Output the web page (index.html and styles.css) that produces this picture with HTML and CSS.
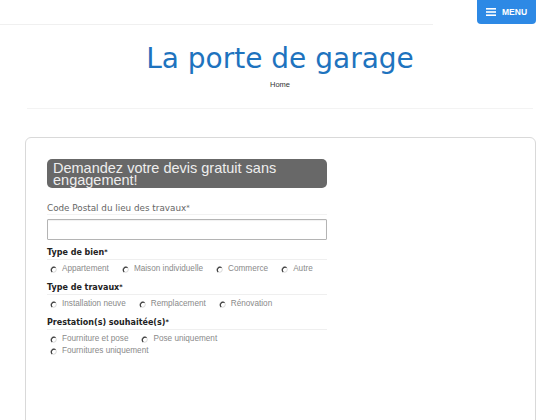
FILE: index.html
```html
<!DOCTYPE html>
<html lang="fr">
<head>
<meta charset="utf-8">
<title>La porte de garage</title>
<link rel="stylesheet" href="styles.css">
</head>
<body>
<header class="topbar">
  <div class="topbar-line"></div>
  <button class="menu-btn" type="button">
    <svg class="menu-icon" width="10" height="8" viewBox="0 0 10 8"><rect x="0" y="0" width="10" height="1.6" fill="#fff"/><rect x="0" y="3.2" width="10" height="1.6" fill="#fff"/><rect x="0" y="6.4" width="10" height="1.6" fill="#fff"/></svg>
    <span>MENU</span>
  </button>
</header>

<div class="branding">
  <h1 class="site-title">La porte de garage</h1>
  <div class="breadcrumb">Home</div>
</div>
<div class="divider"></div>

<main class="card">
  <form class="devis">
    <h2 class="devis-title">Demandez votre devis gratuit sans engagement!</h2>

    <label class="field-label" for="cp">Code Postal du lieu des travaux<span class="req">*</span></label>
    <input class="text-input" id="cp" type="text">

    <div class="section">
      <div class="section-label">Type de bien<span class="req">*</span></div>
      <div class="options">
        <span class="opt"><svg class="radio" width="7" height="7" viewBox="0 0 7 7"><circle cx="3.5" cy="3.5" r="2.8" fill="#fff" stroke="#d4d4d4" stroke-width="0.9"/><path d="M5.6 1.6 A2.8 2.8 0 0 0 2.2 6" fill="none" stroke="#3a3a3a" stroke-width="1.1"/></svg>Appartement</span>
        <span class="opt"><svg class="radio" width="7" height="7" viewBox="0 0 7 7"><circle cx="3.5" cy="3.5" r="2.8" fill="#fff" stroke="#d4d4d4" stroke-width="0.9"/><path d="M5.6 1.6 A2.8 2.8 0 0 0 2.2 6" fill="none" stroke="#3a3a3a" stroke-width="1.1"/></svg>Maison individuelle</span>
        <span class="opt"><svg class="radio" width="7" height="7" viewBox="0 0 7 7"><circle cx="3.5" cy="3.5" r="2.8" fill="#fff" stroke="#d4d4d4" stroke-width="0.9"/><path d="M5.6 1.6 A2.8 2.8 0 0 0 2.2 6" fill="none" stroke="#3a3a3a" stroke-width="1.1"/></svg>Commerce</span>
        <span class="opt"><svg class="radio" width="7" height="7" viewBox="0 0 7 7"><circle cx="3.5" cy="3.5" r="2.8" fill="#fff" stroke="#d4d4d4" stroke-width="0.9"/><path d="M5.6 1.6 A2.8 2.8 0 0 0 2.2 6" fill="none" stroke="#3a3a3a" stroke-width="1.1"/></svg>Autre</span>
      </div>
    </div>

    <div class="section">
      <div class="section-label">Type de travaux<span class="req">*</span></div>
      <div class="options">
        <span class="opt"><svg class="radio" width="7" height="7" viewBox="0 0 7 7"><circle cx="3.5" cy="3.5" r="2.8" fill="#fff" stroke="#d4d4d4" stroke-width="0.9"/><path d="M5.6 1.6 A2.8 2.8 0 0 0 2.2 6" fill="none" stroke="#3a3a3a" stroke-width="1.1"/></svg>Installation neuve</span>
        <span class="opt"><svg class="radio" width="7" height="7" viewBox="0 0 7 7"><circle cx="3.5" cy="3.5" r="2.8" fill="#fff" stroke="#d4d4d4" stroke-width="0.9"/><path d="M5.6 1.6 A2.8 2.8 0 0 0 2.2 6" fill="none" stroke="#3a3a3a" stroke-width="1.1"/></svg>Remplacement</span>
        <span class="opt"><svg class="radio" width="7" height="7" viewBox="0 0 7 7"><circle cx="3.5" cy="3.5" r="2.8" fill="#fff" stroke="#d4d4d4" stroke-width="0.9"/><path d="M5.6 1.6 A2.8 2.8 0 0 0 2.2 6" fill="none" stroke="#3a3a3a" stroke-width="1.1"/></svg>Rénovation</span>
      </div>
    </div>

    <div class="section">
      <div class="section-label">Prestation(s) souhaitée(s)<span class="req">*</span></div>
      <div class="options options-wrap">
        <span class="opt"><svg class="radio" width="7" height="7" viewBox="0 0 7 7"><circle cx="3.5" cy="3.5" r="2.8" fill="#fff" stroke="#d4d4d4" stroke-width="0.9"/><path d="M5.6 1.6 A2.8 2.8 0 0 0 2.2 6" fill="none" stroke="#3a3a3a" stroke-width="1.1"/></svg>Fourniture et pose</span>
        <span class="opt"><svg class="radio" width="7" height="7" viewBox="0 0 7 7"><circle cx="3.5" cy="3.5" r="2.8" fill="#fff" stroke="#d4d4d4" stroke-width="0.9"/><path d="M5.6 1.6 A2.8 2.8 0 0 0 2.2 6" fill="none" stroke="#3a3a3a" stroke-width="1.1"/></svg>Pose uniquement</span>
        <span class="opt opt-break"><svg class="radio" width="7" height="7" viewBox="0 0 7 7"><circle cx="3.5" cy="3.5" r="2.8" fill="#fff" stroke="#d4d4d4" stroke-width="0.9"/><path d="M5.6 1.6 A2.8 2.8 0 0 0 2.2 6" fill="none" stroke="#3a3a3a" stroke-width="1.1"/></svg>Fournitures uniquement</span>
      </div>
    </div>
  </form>
</main>
</body>
</html>
```

FILE: styles.css
```css
html, body {
  margin: 0;
  padding: 0;
  background: #fff;
}

body {
  font-family: "Liberation Sans", Arial, sans-serif;
  color: #333;
  overflow: hidden;
}

/* top bar */
.topbar {
  display: flex;
  align-items: flex-start;
  height: 25px;
  padding-right: 24px;
}

.topbar-line {
  flex: 1;
  height: 24px;
  border-bottom: 1px solid #f0f0f0;
  margin-right: 44px;
}

.menu-btn {
  display: flex;
  align-items: center;
  gap: 6px;
  width: 59px;
  height: 24px;
  padding: 0 0 0 9px;
  border: 0;
  border-radius: 0 0 4px 4px;
  background: #2d89e5;
  color: #fff;
  font-family: "Liberation Sans", Arial, sans-serif;
  font-weight: bold;
  font-size: 8.5px;
}

.menu-icon {
  display: block;
}

/* branding */
.branding {
  text-align: center;
  padding-top: 17px;
}

.site-title {
  margin: 0;
  font-family: "DejaVu Sans", Verdana, sans-serif;
  font-weight: normal;
  font-size: 28px;
  line-height: 34px;
  color: #1e73be;
}

.breadcrumb {
  margin-top: 4px;
  font-size: 7.5px;
  line-height: 10px;
  color: #333;
}

.divider {
  margin: 18px 27px 0 27px;
  height: 0;
  border-top: 1px solid #f3f3f3;
}

/* card */
.card {
  margin: 28px 24px 0 25px;
  border: 1px solid #d9d9d9;
  border-radius: 6px;
  min-height: 300px;
  padding: 21px 21px 0 21px;
}

.devis {
  width: 280px;
}

.devis-title {
  margin: 0;
  padding: 3px 6px 2px 6px;
  background: #686868;
  border-radius: 5px;
  color: #eeeeee;
  font-family: "Liberation Sans", Arial, sans-serif;
  font-weight: normal;
  font-size: 14.5px;
  line-height: 12px;
}

.field-label {
  display: block;
  margin-top: 15px;
  font-family: "DejaVu Sans", Verdana, sans-serif;
  font-size: 8.8px;
  line-height: 11px;
  color: #666;
  border-bottom: 1px solid #f2f2f2;
}

.req {
  font-size: 0.8em;
  vertical-align: top;
  position: relative;
  top: -1px;
}

.text-input {
  display: block;
  box-sizing: border-box;
  width: 280px;
  height: 21px;
  margin: 4px 0 0 0;
  border: 1px solid #b4b4b4;
  border-radius: 1px;
  background: #fff;
  box-shadow: inset 0 1px 1px rgba(0,0,0,0.06);
}

.section {
  margin-top: 7px;
}

.section-label {
  font-family: "DejaVu Sans", Verdana, sans-serif;
  font-weight: bold;
  font-size: 8px;
  line-height: 12px;
  color: #222;
  border-bottom: 1px solid #efefef;
}

.options {
  display: flex;
  flex-wrap: wrap;
  column-gap: 13px;
  margin-top: 3px;
  padding-left: 3px;
  font-family: "Liberation Sans", Arial, sans-serif;
  font-size: 8.2px;
  line-height: 12px;
  color: #8a8a8a;
}

.opt {
  display: flex;
  align-items: center;
  gap: 5px;
  white-space: nowrap;
}

.radio {
  display: block;
}

.opt-break {
  flex-basis: 100%;
}
```
